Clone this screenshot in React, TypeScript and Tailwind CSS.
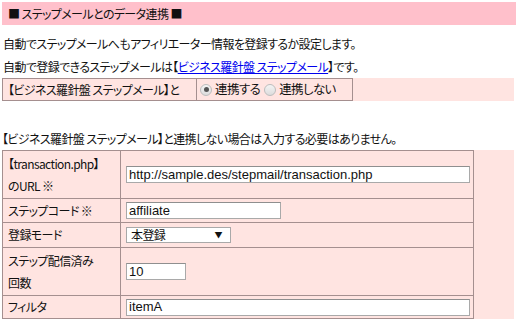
import React from "react";

const jp = "font-['Noto_Sans_CJK_JP','Noto_Sans',sans-serif] [font-feature-settings:'palt'] tracking-[-0.6px]";
const latin = "font-['Liberation_Sans',Arial,sans-serif] tracking-normal";

function Radio({ checked }: { checked: boolean }) {
    return (
        <span className="inline-flex shrink-0 items-center justify-center w-[12px] h-[12px] rounded-full border border-[#bdbdbd] bg-gradient-to-b from-[#f4f4f4] to-[#dcdcdc]">
            {checked && <span className="block w-[5px] h-[5px] rounded-full bg-[#555]" />}
        </span>
    );
}

function TextBox({ value, width }: { value: string; width: string }) {
    return (
        <div className={`${width} h-[17px] bg-white border border-[#a9a9a9] border-t-[#8f8f8f] pl-[2px] flex items-center text-[13px] text-[#111] ${latin}`}>
            {value}
        </div>
    );
}

export default function App() {
    const border = "border border-[#a58f8f] align-middle whitespace-nowrap";
    const cell = `${border} px-[5px]`;
    return (
        <div className={`w-[518px] h-[320px] overflow-hidden bg-white pt-[2px] px-[2px] text-[12px] text-[#111] ${jp}`}>
            <div className="h-[23px] bg-[#ffc0cb] pl-[6px] flex items-center">■ ステップメールとのデータ連携 ■</div>

            <p className="mt-[10px] h-[18px] leading-[18px] pl-[1px]">
                自動でステップメールへもアフィリエーター情報を登録するか設定します。
            </p>
            <p className="mt-[5px] h-[18px] leading-[18px] pl-[1px]">
                自動で登録できるステップメールは【
                <a className="text-[#0000ee] underline">ビジネス羅針盤 ステップメール</a>
                】です。
            </p>

            <div className="mt-[2px] w-[512px] bg-[#ffe4e1]">
                <table className="border-collapse">
                    <tbody>
                        <tr className="h-[22px]">
                            <td className={`${cell} w-[194px] py-0`}>【ビジネス羅針盤 ステップメール】と</td>
                            <td className={`${border} w-[156px] pl-[3px] pr-[4px] py-0`}>
                                <div className="flex items-center gap-[3px] text-[12.5px]">
                                    <Radio checked />
                                    <span className="mr-[1px]">連携する</span>
                                    <Radio checked={false} />
                                    <span>連携しない</span>
                                </div>
                            </td>
                        </tr>
                    </tbody>
                </table>
            </div>

            <p className="mt-[29px] h-[18px] leading-[18px]">
                【ビジネス羅針盤 ステップメール】と連携しない場合は入力する必要はありません。
            </p>

            <div className="mt-[2px] w-[512px] bg-[#ffe4e1]">
                <table className="border-collapse table-fixed w-[472px]">
                    <tbody>
                        <tr className="h-[48px]">
                            <td className={`${cell} w-[118px] leading-[22px]`}>
                                【transaction.php】
                                <br />
                                のURL ※
                            </td>
                            <td className={cell}>
                                <TextBox value="http://sample.des/stepmail/transaction.php" width="w-[344px]" />
                            </td>
                        </tr>
                        <tr className="h-[24px]">
                            <td className={cell}>ステップコード ※</td>
                            <td className={cell}>
                                <TextBox value="affiliate" width="w-[155px]" />
                            </td>
                        </tr>
                        <tr className="h-[25px]">
                            <td className={cell}>登録モード</td>
                            <td className={cell}>
                                <div className="w-[105px] h-[16px] bg-white border border-[#a9a9a9] flex items-center justify-between pl-[4px] pr-[8px]">
                                    <span>本登録</span>
                                    <span className="text-[8px] leading-none">▼</span>
                                </div>
                            </td>
                        </tr>
                        <tr className="h-[48px]">
                            <td className={`${cell} leading-[22px]`}>
                                ステップ配信済み
                                <br />
                                回数
                            </td>
                            <td className={cell}>
                                <TextBox value="10" width="w-[60px]" />
                            </td>
                        </tr>
                        <tr className="h-[23px]">
                            <td className={cell}>フィルタ</td>
                            <td className={cell}>
                                <TextBox value="itemA" width="w-[344px]" />
                            </td>
                        </tr>
                    </tbody>
                </table>
            </div>
        </div>
    );
}
